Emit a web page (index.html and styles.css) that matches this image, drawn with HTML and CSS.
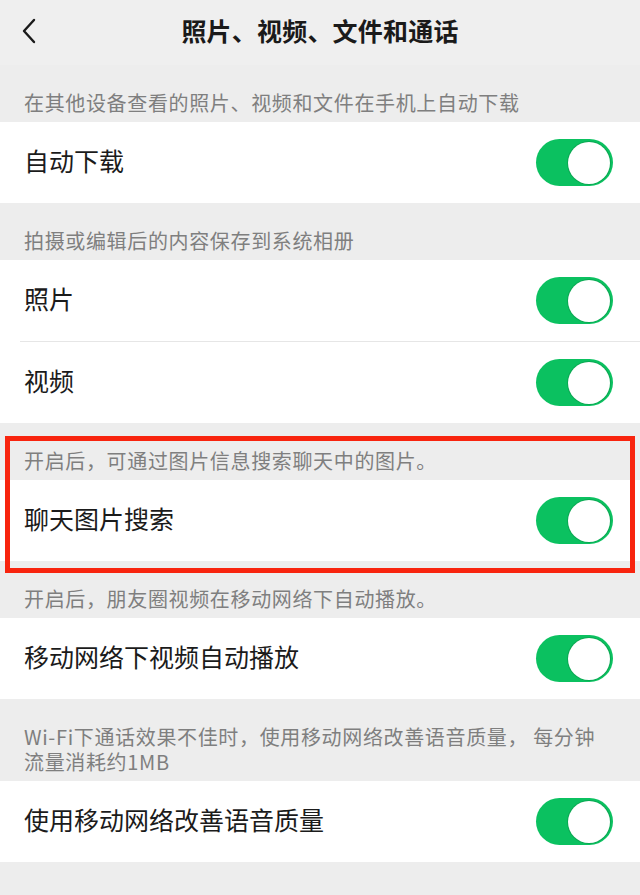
FILE: index.html
```html
<!DOCTYPE html>
<html lang="zh-CN">
<head>
<meta charset="utf-8">
<title>照片、视频、文件和通话</title>
<link rel="stylesheet" href="styles.css">
</head>
<body>
<div class="page">
  <header class="nav">
    <svg class="back" width="16" height="26" viewBox="0 0 16 26"><path d="M13 2 L3 13 L13 24" fill="none" stroke="#1a1a1a" stroke-width="2.4" stroke-linecap="round" stroke-linejoin="round"/></svg>
    <h1 class="title">照片、视频、文件和通话</h1>
  </header>

  <div class="caption">在其他设备查看的照片、视频和文件在手机上自动下载</div>
  <div class="group">
    <div class="row"><span class="label">自动下载</span><span class="switch"><span class="knob"></span></span></div>
  </div>

  <div class="caption">拍摄或编辑后的内容保存到系统相册</div>
  <div class="group">
    <div class="row"><span class="label">照片</span><span class="switch"><span class="knob"></span></span></div>
    <div class="sep"></div>
    <div class="row"><span class="label">视频</span><span class="switch"><span class="knob"></span></span></div>
  </div>

  <div class="highlight">
    <div class="caption">开启后，可通过图片信息搜索聊天中的图片。</div>
    <div class="group">
      <div class="row"><span class="label">聊天图片搜索</span><span class="switch"><span class="knob"></span></span></div>
    </div>
  </div>

  <div class="caption">开启后，朋友圈视频在移动网络下自动播放。</div>
  <div class="group">
    <div class="row"><span class="label">移动网络下视频自动播放</span><span class="switch"><span class="knob"></span></span></div>
  </div>

  <div class="caption caption-wrap">Wi-Fi下通话效果不佳时，使用移动网络改善语音质量， 每分钟流量消耗约1MB</div>
  <div class="group">
    <div class="row"><span class="label">使用移动网络改善语音质量</span><span class="switch"><span class="knob"></span></span></div>
  </div>
</div>
</body>
</html>
```

FILE: styles.css
```css
* { box-sizing: border-box; }
html, body {
  margin: 0;
  padding: 0;
  background: #ededed;
}
body {
  font-family: "Noto Sans CJK SC", "Noto Sans", sans-serif;
  color: #1a1a1a;
}
.page {
  width: 640px;
  min-height: 895px;
  background: #ededed;
  display: flex;
  flex-direction: column;
}
.nav {
  height: 65px;
  display: flex;
  align-items: center;
  justify-content: center;
  position: relative;
  background: #efefef;
}
.back {
  position: absolute;
  left: 21px;
  top: 18px;
}
.title {
  margin: 0;
  font-size: 25px;
  font-weight: 600;
  line-height: 30px;
  letter-spacing: 0.2px;
  color: #1a1a1a;
  padding-bottom: 5px;
}
.caption {
  padding: 25px 24px 7px 24px;
  font-size: 20px;
  line-height: 25px;
  color: #7f7f7f;
  letter-spacing: 0.65px;
}
.caption-wrap {
  padding-right: 34px;
}
.group {
  background: #ffffff;
}
.row {
  height: 81px;
  display: flex;
  align-items: center;
  justify-content: space-between;
  padding: 0 27px 0 24px;
}
.label {
  font-size: 25px;
  line-height: 34px;
  padding-bottom: 5px;
  color: #1b1b1b;
}
.sep {
  height: 1px;
  background: #e6e6e6;
  margin-left: 20px;
}
.switch {
  width: 77px;
  height: 47px;
  border-radius: 24px;
  background: #0bc160;
  display: flex;
  justify-content: flex-end;
  align-items: center;
  padding: 2px 3px;
}
.knob {
  width: 42px;
  height: 42px;
  border-radius: 50%;
  background: #ffffff;
  box-shadow: 0 0 0 1px #0aa852;
}
.highlight {
  position: relative;
}
.highlight::after {
  content: "";
  position: absolute;
  left: 5px;
  right: 5px;
  top: 13px;
  bottom: -12px;
  border: 5px solid #f8240e;
  pointer-events: none;
}
```
